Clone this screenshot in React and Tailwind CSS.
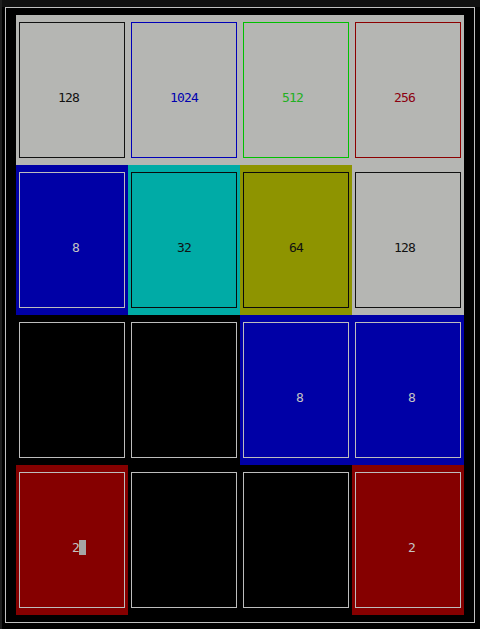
import React from 'react'

// board state, row by row
const cells = [
  { v: '128', bg: 'bg-[#b5b6b3]', bd: 'border-[#111111]', fg: 'text-[#111111]' },
  { v: '1024', bg: 'bg-[#b5b6b3]', bd: 'border-[#0000b8]', fg: 'text-[#0000b0]' },
  { v: '512', bg: 'bg-[#b5b6b3]', bd: 'border-[#00c000]', fg: 'text-[#22b022]' },
  { v: '256', bg: 'bg-[#b5b6b3]', bd: 'border-[#8c0000]', fg: 'text-[#8c0010]' },

  { v: '8', bg: 'bg-[#0000a6]', bd: 'border-[#bdbdbd]', fg: 'text-[#c4c4c4]' },
  { v: '32', bg: 'bg-[#00aba6]', bd: 'border-[#0a0a0a]', fg: 'text-[#111111]' },
  { v: '64', bg: 'bg-[#8e9400]', bd: 'border-[#0a0a0a]', fg: 'text-[#111111]' },
  { v: '128', bg: 'bg-[#b5b6b3]', bd: 'border-[#111111]', fg: 'text-[#111111]' },

  { v: '', bg: 'bg-black', bd: 'border-[#bdbdbd]', fg: 'text-[#c4c4c4]' },
  { v: '', bg: 'bg-black', bd: 'border-[#bdbdbd]', fg: 'text-[#c4c4c4]' },
  { v: '8', bg: 'bg-[#0000a6]', bd: 'border-[#bdbdbd]', fg: 'text-[#c4c4c4]' },
  { v: '8', bg: 'bg-[#0000a6]', bd: 'border-[#bdbdbd]', fg: 'text-[#c4c4c4]' },

  { v: '2', bg: 'bg-[#850000]', bd: 'border-[#bdbdbd]', fg: 'text-[#c4c4c4]', cursor: true },
  { v: '', bg: 'bg-black', bd: 'border-[#bdbdbd]', fg: 'text-[#c4c4c4]' },
  { v: '', bg: 'bg-black', bd: 'border-[#bdbdbd]', fg: 'text-[#c4c4c4]' },
  { v: '2', bg: 'bg-[#850000]', bd: 'border-[#bdbdbd]', fg: 'text-[#c4c4c4]' },
]

// terminal column offset of the number inside a 16-col tile
const padFor = {
  0: 'pl-[56px]',
  1: 'pl-[56px]',
  2: 'pl-[49px]',
  3: 'pl-[42px]',
  4: 'pl-[42px]',
}

function Tile({ cell }) {
  return (
    <div className={`w-[112px] h-[150px] px-[3px] py-[7px] ${cell.bg}`}>
      <div className={`w-[106px] h-[136px] border ${cell.bd} pt-[67px]`}>
        <div className={`flex h-[15px] leading-[15px] ${padFor[cell.v.length]} -ml-[4px] ${cell.fg}`}>
          <span className="tracking-[-0.83px]">{cell.v}</span>
          {cell.cursor && <span className="w-[7px] h-[15px] bg-[#a6a6a6]"></span>}
        </div>
      </div>
    </div>
  )
}

export default function App() {
  return (
    <div
      className="w-[480px] h-[629px] bg-black flex overflow-hidden text-[13px]"
      style={{ fontFamily: '"DejaVu Sans Mono", "Liberation Mono", monospace' }}
    >
      <div className="w-[2px] h-full bg-[#1e1e1e]"></div>
      <div className="flex-1 flex flex-col">
        <div className="h-[7px] bg-[#101010]"></div>
        <div className="ml-[3px] w-[470px] h-[616px] border border-[#c0c0c0] px-[10px] py-[7px]">
          <div className="grid grid-cols-4 w-[448px] h-[600px]">
            {cells.map((c, i) => (
              <Tile key={i} cell={c} />
            ))}
          </div>
        </div>
      </div>
    </div>
  )
}
